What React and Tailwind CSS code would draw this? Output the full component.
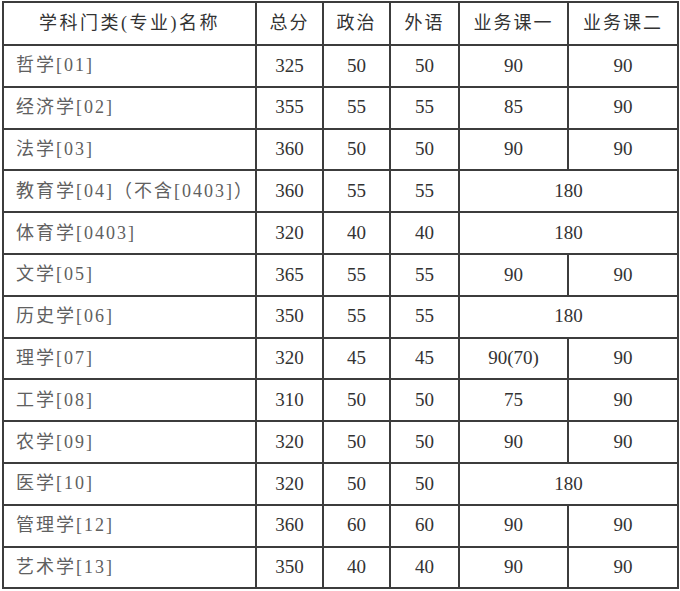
import React from "react";

const rows = [
  ["哲学[01]", "325", "50", "50", "90", "90"],
  ["经济学[02]", "355", "55", "55", "85", "90"],
  ["法学[03]", "360", "50", "50", "90", "90"],
  ["教育学[04]（不含[0403]）", "360", "55", "55", "180"],
  ["体育学[0403]", "320", "40", "40", "180"],
  ["文学[05]", "365", "55", "55", "90", "90"],
  ["历史学[06]", "350", "55", "55", "180"],
  ["理学[07]", "320", "45", "45", "90(70)", "90"],
  ["工学[08]", "310", "50", "50", "75", "90"],
  ["农学[09]", "320", "50", "50", "90", "90"],
  ["医学[10]", "320", "50", "50", "180"],
  ["管理学[12]", "360", "60", "60", "90", "90"],
  ["艺术学[13]", "350", "40", "40", "90", "90"],
];

const font = { fontFamily: '"Liberation Serif", "Noto Sans CJK SC", serif' };
const cell = "border-2 border-[#3c3c3c] p-0";

export default function App() {
  return (
    <div className="w-[680px] h-[591px] bg-white pt-[1px] pl-[2px]" style={font}>
      <table className="table-fixed border-collapse w-[675px]">
        <colgroup>
          <col className="w-[253px]" />
          <col className="w-[67px]" />
          <col className="w-[67px]" />
          <col className="w-[69px]" />
          <col className="w-[109px]" />
          <col className="w-[110px]" />
        </colgroup>
        <thead>
          <tr className="h-[43px] text-[18px] text-[#333] tracking-[2px]">
            <th className={cell + " font-normal tracking-[2.5px]"}>学科门类(专业)名称</th>
            <th className={cell + " font-normal"}>总分</th>
            <th className={cell + " font-normal"}>政治</th>
            <th className={cell + " font-normal"}>外语</th>
            <th className={cell + " font-normal tracking-[2px]"}>业务课一</th>
            <th className={cell + " font-normal tracking-[2px]"}>业务课二</th>
          </tr>
        </thead>
        <tbody>
          {rows.map((r, i) => (
            <tr key={i} className="h-[41.8px]">
              <td className={cell + " pl-[12px] text-[18px] text-[#606060] tracking-[2px] whitespace-nowrap"}>{r[0]}</td>
              <td className={cell + " text-center text-[19px] text-[#333]"}>{r[1]}</td>
              <td className={cell + " text-center text-[19px] text-[#333]"}>{r[2]}</td>
              <td className={cell + " text-center text-[19px] text-[#333]"}>{r[3]}</td>
              {r.length === 5 ? (
                <td colSpan={2} className={cell + " text-center text-[19px] text-[#333]"}>{r[4]}</td>
              ) : (
                <>
                  <td className={cell + " text-center text-[19px] text-[#333]"}>{r[4]}</td>
                  <td className={cell + " text-center text-[19px] text-[#333]"}>{r[5]}</td>
                </>
              )}
            </tr>
          ))}
        </tbody>
      </table>
    </div>
  );
}
